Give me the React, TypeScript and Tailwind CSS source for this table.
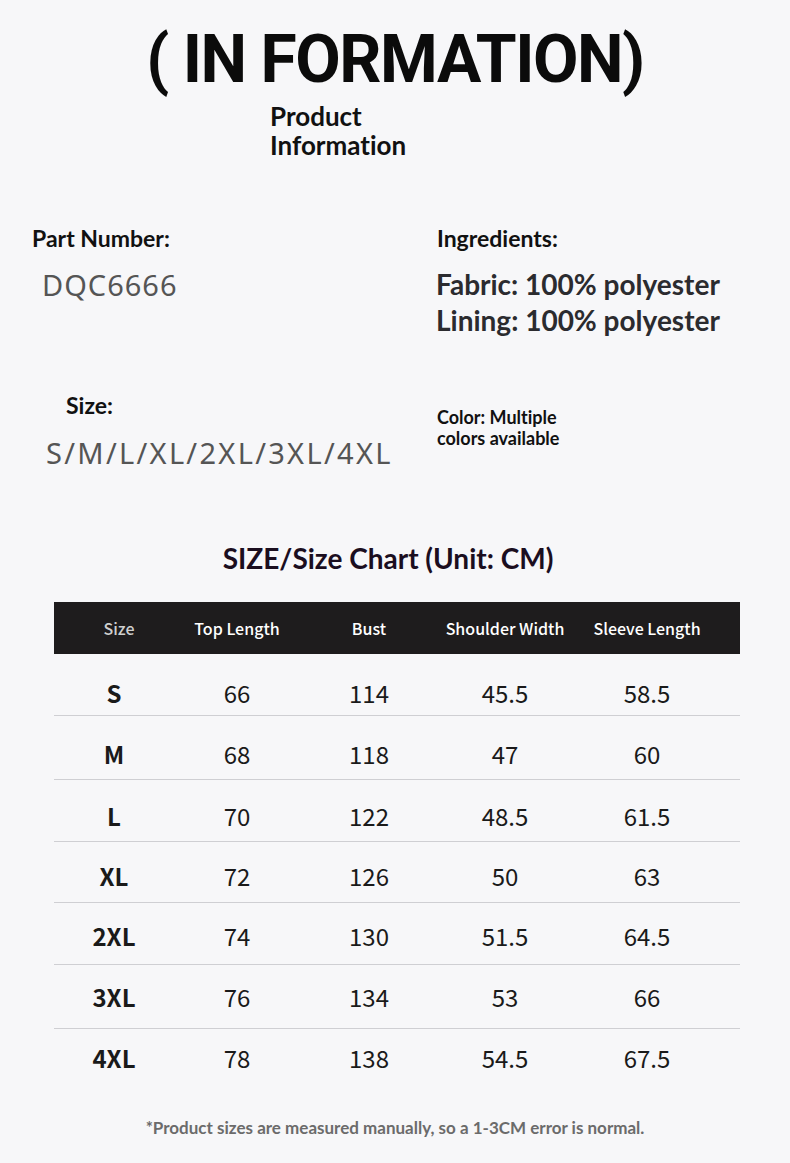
const rows = [
  ["S", "66", "114", "45.5", "58.5"],
  ["M", "68", "118", "47", "60"],
  ["L", "70", "122", "48.5", "61.5"],
  ["XL", "72", "126", "50", "63"],
  ["2XL", "74", "130", "51.5", "64.5"],
  ["3XL", "76", "134", "53", "66"],
  ["4XL", "78", "138", "54.5", "67.5"],
];

// the photo's rows are not quite evenly spaced
const rowBox = [
  "h-[62px] pt-[17px] border-b",
  "h-[64px] pt-[13px] border-b",
  "h-[62px] pt-[11px] border-b",
  "h-[61px] pt-[8px] border-b",
  "h-[62px] pt-[5px] border-b",
  "h-[64px] pt-[1px] border-b",
  "h-[62px] pb-[4px]",
];

const headers = ["Size", "Top Length", "Bust", "Shoulder Width", "Sleeve Length"];

const lato = "font-['Lato','Liberation_Sans',sans-serif]";
const cjk = "font-['Noto_Sans_CJK_SC','Noto_Sans',sans-serif]";
const cols = "grid grid-cols-[124px_118px_146px_126px_158px]";

export default function App() {
  return (
    <div className="w-[790px] h-[1163px] bg-[#f7f7f9] text-[#111] overflow-hidden [font-variant-ligatures:none]">
      <h1 className="pt-[22px] text-center text-[66px] leading-[76px] font-bold tracking-[-1.5px] font-['Roboto','Liberation_Sans',sans-serif] text-[#0b0b0b]">
        ( IN FORMATION)
      </h1>
      <p className={`${lato} ml-[270px] mt-[4px] text-[26px] leading-[29px] font-bold text-[#111]`}>
        Product
        <br />
        Information
      </p>

      <div className="mt-[64px] flex">
        <div className="w-[405px] pl-[32px]">
          <p className={`${lato} text-[23px] leading-[28px] font-bold`}>Part Number:</p>
          <p className="mt-[15px] ml-[10px] font-['Noto_Sans',sans-serif] text-[29px] leading-[36px] tracking-[1px] text-[#555]">
            DQC6666
          </p>
        </div>
        <div className="pl-[32px]">
          <p className={`${lato} text-[23px] leading-[28px] font-bold`}>Ingredients:</p>
          <p className={`${lato} mt-[14px] -ml-[1px] text-[28px] leading-[36px] font-bold text-[#2b2b2f]`}>
            Fabric: 100% polyester
            <br />
            Lining: 100% polyester
          </p>
        </div>
      </div>

      <div className="mt-[53px] flex">
        <div className="w-[405px] pl-[46px]">
          <p className={`${lato} ml-[20px] text-[23px] leading-[28px] font-bold`}>Size:</p>
          <p className="mt-[16px] font-['Noto_Sans',sans-serif] text-[29px] leading-[36px] tracking-[2.3px] text-[#555]">
            S/M/L/XL/2XL/3XL/4XL
          </p>
        </div>
        <div className="pl-[32px] pt-[16px]">
          <p className={`${lato} text-[18px] leading-[21px] font-bold`}>
            Color: Multiple
            <br />
            colors available
          </p>
        </div>
      </div>

      <h2 className={`${lato} mt-[70px] text-center -ml-[14px] text-[28px] leading-[34px] font-bold text-[#1b0e1f]`}>
        SIZE/Size Chart (Unit: CM)
      </h2>

      <div className="mx-[54px] mt-[27px] w-[686px]">
        <div className={`${cjk} ${cols} h-[52px] items-center bg-[#1e1c1d] text-white text-[16px] font-medium text-center`}>
          {headers.map((h, i) => (
            <div key={h} className={i === 0 ? "text-[#cfcfcf] ml-[6px]" : ""}>
              {h}
            </div>
          ))}
        </div>
        {rows.map((r, ri) => (
          <div
            key={r[0]}
            className={`${cjk} ${cols} ${rowBox[ri]} border-[#cfcfd3] items-center text-center text-[24px] text-[#1a1a1a]`}
          >
            {r.map((c, ci) => (
              <div key={ci} className={ci === 0 ? "font-bold -ml-[4px]" : "font-normal"}>
                {c}
              </div>
            ))}
          </div>
        ))}
      </div>

      <p className={`${lato} mt-[26px] text-center text-[17px] leading-[22px] font-bold text-[#6b6b6b]`}>
        *Product sizes are measured manually, so a 1-3CM error is normal.
      </p>
    </div>
  );
}
